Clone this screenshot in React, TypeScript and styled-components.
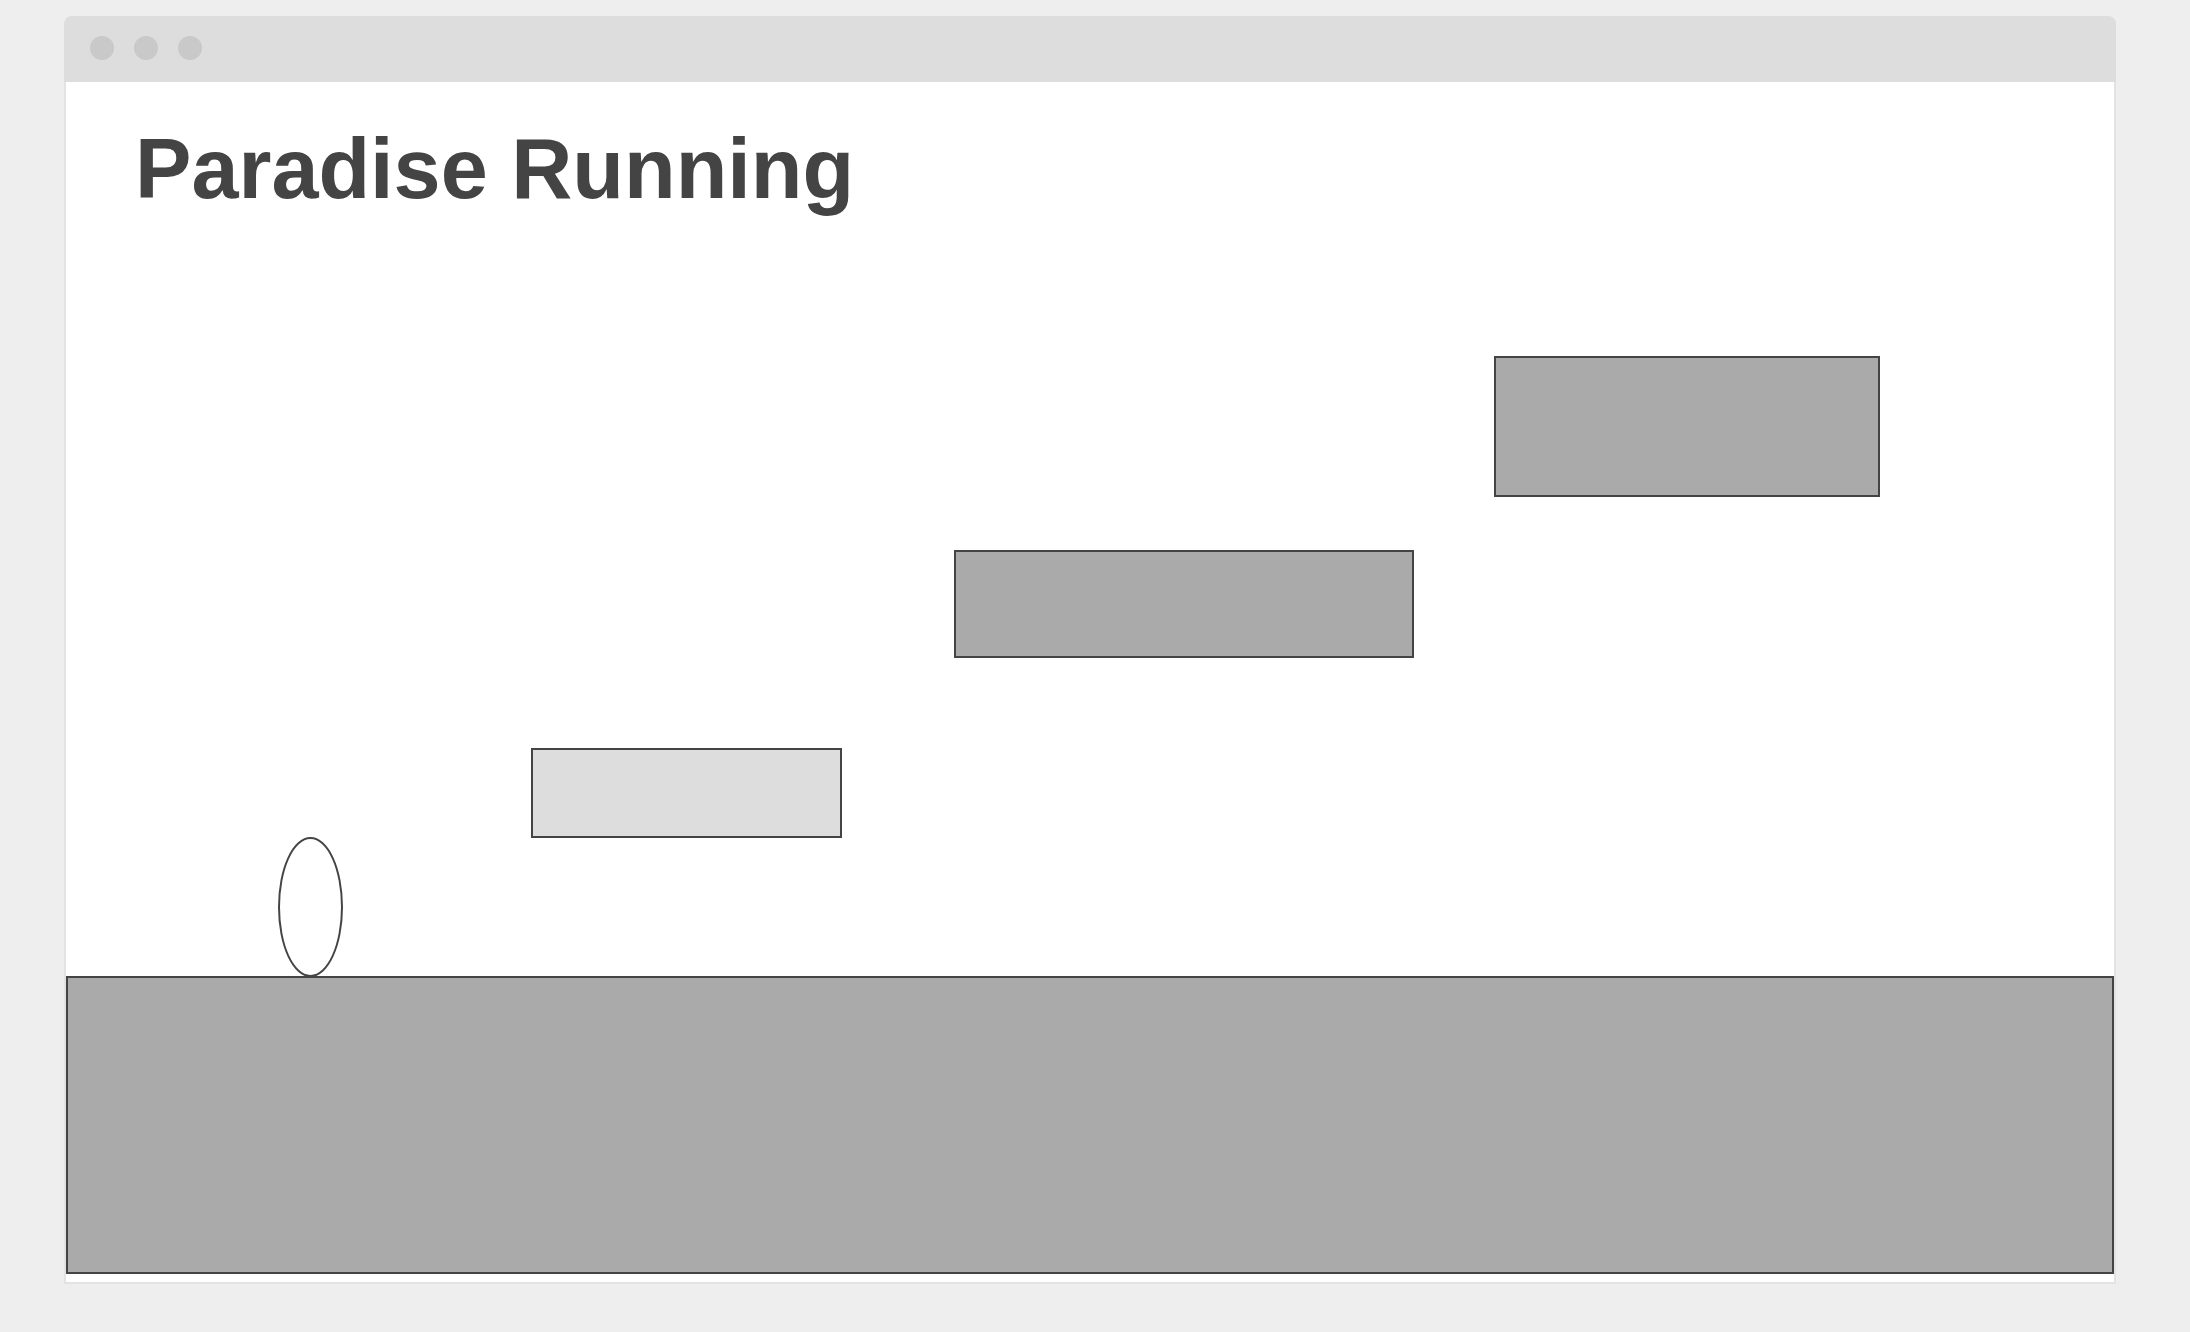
import styled, { createGlobalStyle } from "styled-components";

const GlobalStyle = createGlobalStyle`
  html, body {
    margin: 0;
    padding: 0;
    background: #eeeeee;
    font-family: "Liberation Sans", Arial, sans-serif;
  }
`;

// sprites in stage coordinates (px from the top-left of the viewport)
const platforms = [
  { x: 465, y: 666, w: 311, h: 90, light: true },
  { x: 888, y: 468, w: 460, h: 108, light: false },
  { x: 1428, y: 274, w: 386, h: 141, light: false },
];

export default function App() {
  return (
    <Page>
      <GlobalStyle />
      <BrowserWindow>
        <TitleBar>
          <Dot />
          <Dot />
          <Dot />
        </TitleBar>
        <Viewport>
          <Title>Paradise Running</Title>
          {platforms.map((p, i) => (
            <Platform
              key={i}
              $light={p.light}
              style={{ left: p.x, top: p.y, width: p.w, height: p.h }}
            />
          ))}
          <Runner />
          <Ground />
        </Viewport>
      </BrowserWindow>
    </Page>
  );
}

const Page = styled.div`
  padding: 16px 74px 48px 64px;
`;

const BrowserWindow = styled.div`
  width: 2052px;
  display: flex;
  flex-direction: column;
`;

const TitleBar = styled.div`
  height: 66px;
  background: #dddddd;
  border-radius: 8px 8px 0 0;
  display: flex;
  align-items: center;
  gap: 20px;
  padding: 0 0 2px 26px;
  box-sizing: border-box;
`;

const Dot = styled.span`
  width: 24px;
  height: 24px;
  border-radius: 50%;
  background: #c9c9c9;
`;

const Viewport = styled.div`
  position: relative;
  height: 1200px;
  background: #ffffff;
  border: 2px solid #e3e3e3;
  border-top: none;
  overflow: hidden;
`;

const Title = styled.h1`
  margin: 38px 0 0 69px;
  font-size: 84.6px;
  font-weight: 700;
  line-height: normal;
  color: #444444;
`;

const Platform = styled.div<{ $light: boolean }>`
  position: absolute;
  box-sizing: border-box;
  border: 2px solid #444444;
  background: ${(p) => (p.$light ? "#dddddd" : "#aaaaaa")};
`;

const Runner = styled.div`
  position: absolute;
  left: 212px;
  top: 755px;
  width: 65px;
  height: 140px;
  box-sizing: border-box;
  border: 2px solid #444444;
  border-radius: 50%;
`;

const Ground = styled.div`
  position: absolute;
  left: 0;
  top: 894px;
  width: 2048px;
  height: 298px;
  box-sizing: border-box;
  border: 2px solid #444444;
  background: #aaaaaa;
`;
